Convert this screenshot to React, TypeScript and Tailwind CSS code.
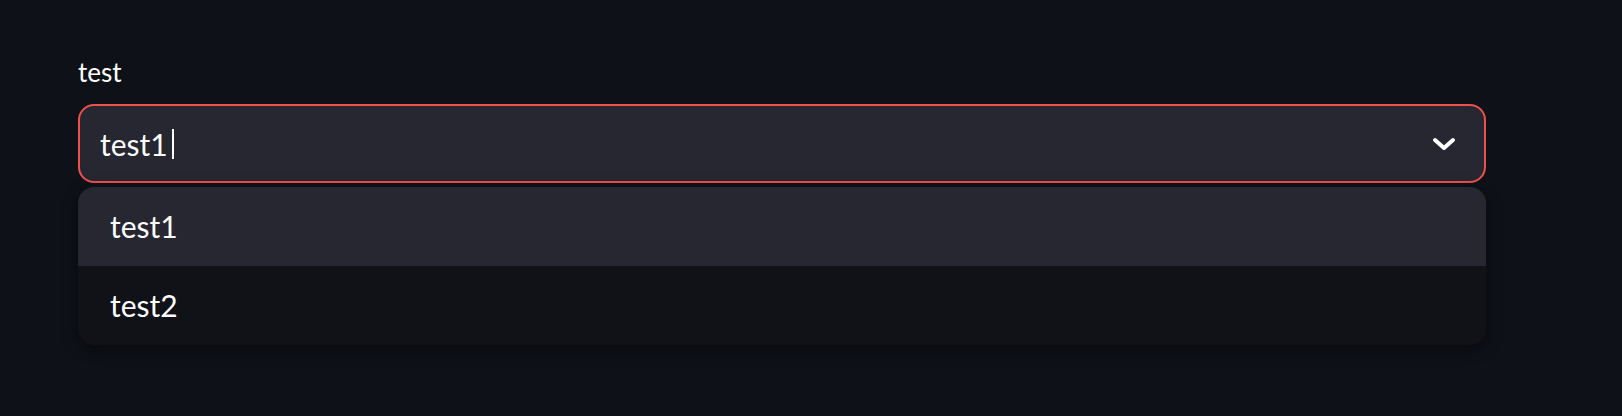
export default function App() {
  const options = ["test1", "test2"];
  return (
    <div
      className="min-h-screen w-full bg-[#0e1117] pl-[78px] pr-[136px] pt-[52px] text-white"
      style={{ fontFamily: "Lato, 'Noto Sans', sans-serif" }}
    >
      {/* Label */}
      <div className="h-[52px] text-[26px] leading-[40px]">test</div>

      {/* Select */}
      <div className="flex h-[79px] items-center rounded-[16px] border-2 border-[#f0514d] bg-[#262730] pl-[20px] pr-[28px]">
        <span className="text-[30px] leading-none">test1</span>
        <span className="ml-[4px] h-[30px] w-[2px] bg-white" />
        <div className="flex-1" />
        <svg width="24" height="14" viewBox="0 0 24 14" fill="none">
          <polyline
            points="3,3 12,11 21,3"
            stroke="white"
            strokeWidth="4"
            strokeLinecap="round"
            strokeLinejoin="round"
          />
        </svg>
      </div>

      {/* Menu */}
      <div className="mt-[4px] overflow-hidden rounded-[16px] bg-[#111218] shadow-[0_4px_16px_rgba(0,0,0,0.45)]">
        {options.map((opt, i) => (
          <div
            key={opt}
            className={`flex h-[79px] items-center pl-[32px] text-[30px] ${
              i === 0 ? "bg-[#262730]" : ""
            }`}
          >
            {opt}
          </div>
        ))}
      </div>
    </div>
  );
}
